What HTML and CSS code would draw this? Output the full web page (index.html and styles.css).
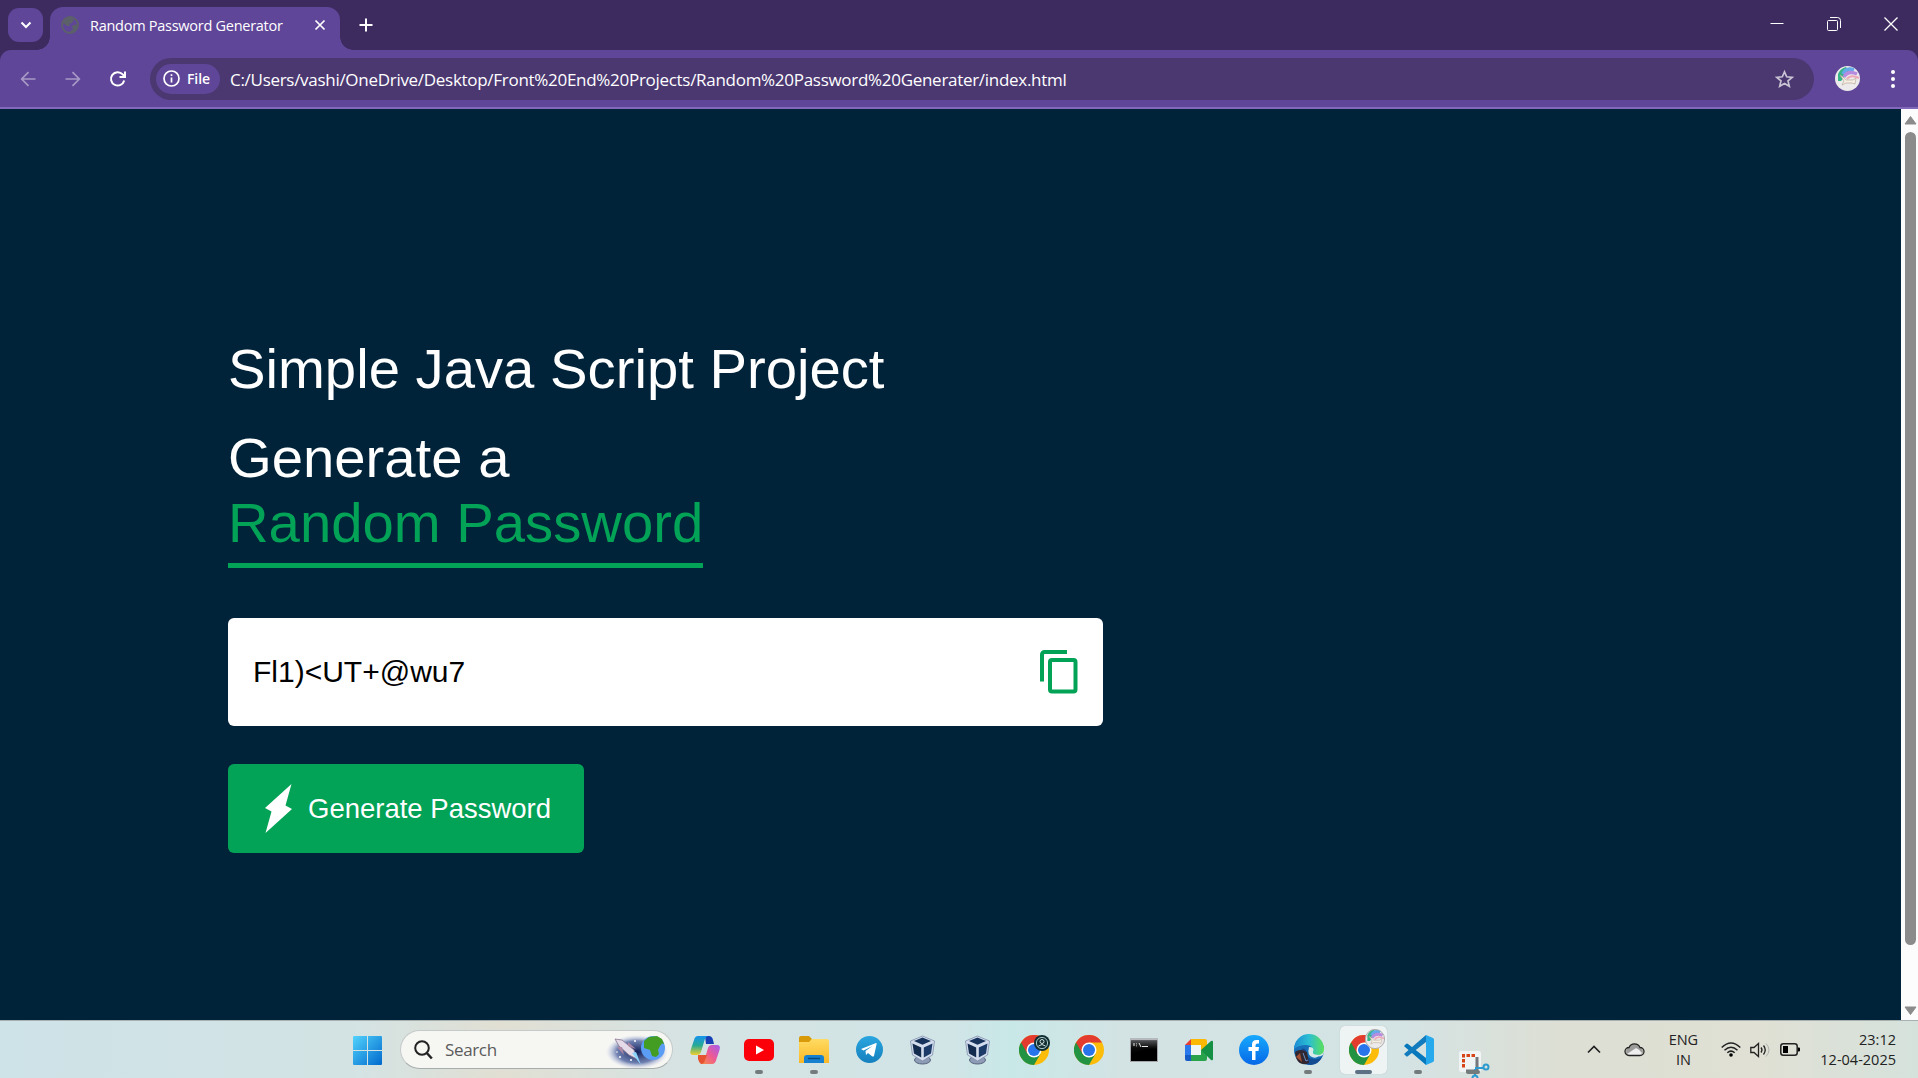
FILE: index.html
```html
<!DOCTYPE html>
<html lang="en">
<head>
<meta charset="utf-8">
<title>Random Password Generator</title>
<link rel="stylesheet" href="styles.css">
</head>
<body>
<svg class="defs" width="0" height="0">
  <defs>
    <linearGradient id="win" x1="0" y1="0" x2="1" y2="1"><stop offset="0" stop-color="#52d3fc"/><stop offset="1" stop-color="#0069cd"/></linearGradient>
    <linearGradient id="cpA" x1="0" y1="0" x2="0" y2="1"><stop offset="0" stop-color="#1593ee"/><stop offset=".5" stop-color="#27aa94"/><stop offset="1" stop-color="#f1cf2b"/></linearGradient>
    <linearGradient id="cpB" x1="1" y1="0" x2="0" y2="1"><stop offset="0" stop-color="#a45cf0"/><stop offset=".5" stop-color="#ee5a93"/><stop offset="1" stop-color="#f7913f"/></linearGradient>
    <linearGradient id="fold" x1="0" y1="0" x2="0" y2="1"><stop offset="0" stop-color="#ffdb63"/><stop offset="1" stop-color="#fbb825"/></linearGradient>
    <linearGradient id="tg" x1="0" y1="0" x2="0" y2="1"><stop offset="0" stop-color="#2aa6e0"/><stop offset="1" stop-color="#1580bd"/></linearGradient>
    <linearGradient id="fb" x1="0" y1="0" x2="0" y2="1"><stop offset="0" stop-color="#17a9fd"/><stop offset="1" stop-color="#0668e7"/></linearGradient>
    <linearGradient id="edgeTop" x1="0" y1="0" x2="1" y2="0"><stop offset="0" stop-color="#1a8bd5"/><stop offset=".5" stop-color="#2cbfd2"/><stop offset="1" stop-color="#5be05a"/></linearGradient>
    <linearGradient id="cmd" x1="0" y1="0" x2="0" y2="1"><stop offset="0" stop-color="#4b4d4e"/><stop offset=".5" stop-color="#090909"/><stop offset="1" stop-color="#000"/></linearGradient>
    <radialGradient id="glow"><stop offset="0" stop-color="#101f58"/><stop offset=".65" stop-color="#566aa4" stop-opacity=".85"/><stop offset="1" stop-color="#b9c3e4" stop-opacity="0"/></radialGradient>
    <symbol id="chrome" viewBox="0 0 48 48">
      <circle cx="24" cy="24" r="24" fill="#fbbc0a"/>
      <path d="M3.200 12A24 24 0 0 0 24 48L34.400 30 24 24z" fill="#229342"/>
      <path d="M3.200 12 13.600 30 24 24 24 12H44.800A24 24 0 0 0 3.200 12z" fill="#e33b2e"/>
      <circle cx="24" cy="24" r="12" fill="#fff"/><circle cx="24" cy="24" r="9.600" fill="#2874ea"/>
    </symbol>
    <symbol id="vbox" viewBox="0 0 26 30">
      <ellipse cx="13" cy="25" rx="8" ry="4" fill="#8e9db5" stroke="#56647d"/>
      <path d="M13 1 25 6 23 20 13 26 3 20 1 6z" fill="#d3dded" stroke="#7484a5" stroke-width=".7"/>
      <path d="M13 2.500 21.500 6 13 9.800 4.500 6z" fill="#17325b"/><path d="M3 8.500 11.700 12.500V22.500L4.500 18.500z" fill="#142b50"/><path d="M23 8.500 14.300 12.500V22.500L21.500 18.500z" fill="#1d3b68"/>
    </symbol>
    <symbol id="unicorn" viewBox="0 0 25 25">
      <circle cx="12.500" cy="12.500" r="12.500" fill="#eceaea"/>
      <path d="M3 15V8a12 12 0 0 1 8-7l3 5-8 9z" fill="#35b487"/>
      <path d="M8 8Q11 1 19 4" fill="none" stroke="#66a9e8" stroke-width="3.500"/>
      <path d="M9 11Q13 4 22 8" fill="none" stroke="#b78be0" stroke-width="3.500"/>
      <path d="M12 13Q16 8 24 12" fill="none" stroke="#efa7b8" stroke-width="2"/>
      <path d="M5 9 8 11 11 14 18 14 21 12 20 18 17 17H11L7 19 9 15z" fill="#f6f0e5" stroke="#b9ab9a" stroke-width=".7"/>
    </symbol>
  </defs>
</svg>
<div class="desktop">
  <header class="browser">
    <div class="tabstrip">
      <button class="tab-search"><svg width="12" height="8" viewBox="0 0 12 8"><path d="M1.500 1.500 6 6l4.500-4.500" class="line w2"/></svg></button>
      <div class="tab">
        <svg class="globe" width="18" height="18" viewBox="0 0 18 18"><circle cx="9" cy="9" r="8" fill="none" stroke="#5c6069" stroke-width="1.800"/><path d="M9 1c3 0 2 2 4 3l-2 3-3 1 1 2H6L2 7Q4 1 9 1zM11 10l5-2q1 5-4 8l-3 .500q0-2 3-3z" fill="#5c6069"/></svg>
        <span class="tab-title">Random Password Generator</span>
        <svg class="tab-close" width="12" height="12" viewBox="0 0 12 12"><path d="m1.500 1.500 9 9m0-9-9 9" class="line w17"/></svg>
      </div>
      <svg class="new-tab" width="14" height="14" viewBox="0 0 14 14"><path d="M7 .5v13M.5 7h13" class="line w2"/></svg>
      <div class="window-controls">
        <svg width="14" height="14" viewBox="0 0 14 14"><path d="M.5 6.500h13" class="line"/></svg>
        <svg width="14" height="14" viewBox="0 0 14 14"><path d="M3 .5h7.500a3 3 0 0 1 3 3V11" class="line"/><rect x=".5" y="3.500" width="10" height="10" rx="1" class="line"/></svg>
        <svg width="14" height="14" viewBox="0 0 14 14"><path d="m.5.5 13 13m0-13-13 13" class="line w1"/></svg>
      </div>
    </div>
    <div class="toolbar">
      <svg class="nav dim" width="16" height="16" viewBox="0 0 16 16"><path d="M15.500 8H2M8.500 1.200 1.700 8l6.800 6.800" class="line w17"/></svg>
      <svg class="nav dim" width="16" height="16" viewBox="0 0 16 16"><path d="M.5 8H14M7.500 1.200 14.300 8l-6.800 6.800" class="line w17"/></svg>
      <svg class="nav" width="16" height="16" viewBox="0 0 16 16"><path d="M14.200 9.500A6.700 6.700 0 1 1 12.700 3.400L14.500 5.500M15 .5V6H9.500" class="line w2"/></svg>
      <div class="address">
        <div class="file-chip"><svg width="17" height="17" viewBox="0 0 17 17"><circle cx="8.500" cy="8.500" r="7.500" class="line w17"/><path d="M8.500 7.500v5M8.500 4.300v1.700" class="line w17"/></svg><span>File</span></div>
        <span class="url">C:/Users/vashi/OneDrive/Desktop/Front%20End%20Projects/Random%20Password%20Generater/index.html</span>
        <svg class="star" width="19" height="18" viewBox="0 0 19 18"><path d="m9.500 1.800 2.200 5 5.500.5-4.200 3.600 1.300 5.400-4.800-2.900-4.800 2.900L6 10.900 1.800 7.300l5.500-.5z" class="line w17"/></svg>
      </div>
      <svg class="avatar" width="25" height="25"><use href="#unicorn"/></svg>
      <svg class="kebab" width="4" height="18" viewBox="0 0 4 18"><circle cx="2" cy="2" r="2"/><circle cx="2" cy="9" r="2"/><circle cx="2" cy="16" r="2"/></svg>
    </div>
  </header>
  <div class="viewport">
    <main class="page">
      <h1 class="intro">Simple Java Script Project</h1>
      <h1 class="title">Generate a<br><span class="accent">Random Password</span></h1>
      <div class="display">
        <span class="password">Fl1)&lt;UT+@wu7</span>
        <svg width="38" height="44" viewBox="0 0 38 44"><path d="M2 31.500V4.500a2.500 2.500 0 0 1 2.500-2.500H27" fill="none" stroke="#02a257" stroke-width="4"/><rect x="10" y="10" width="25.500" height="31.500" rx="2" fill="none" stroke="#02a257" stroke-width="4"/></svg>
      </div>
      <button class="generate"><svg width="27" height="49" viewBox="0 0 27 49"><path d="M26.500 0 0 24 6.500 27.500.5 49 27 25 20.500 21.500z" fill="#fff"/></svg>Generate Password</button>
    </main>
    <div class="scrollbar">
      <svg width="13" height="10" viewBox="0 0 13 10"><path d="M6.500 1.500 12 9H1z" class="tri"/></svg>
      <div class="thumb"></div>
      <svg width="13" height="10" viewBox="0 0 13 10"><path d="M6.500 8.500 12 1H1z" class="tri"/></svg>
    </div>
  </div>
  <footer class="taskbar">
    <svg class="start" width="29" height="29" viewBox="0 0 29 29"><path d="M1 0h13v14H0V1q0-1 1-1zM15 0h13q1 0 1 1v13H15zM0 15h14v14H1q-1 0-1-1zM15 15h14v13q0 1-1 1H15z" fill="url(#win)"/></svg>
    <div class="search">
      <svg width="19" height="20" viewBox="0 0 19 20"><circle cx="8" cy="8" r="6.800" class="ink w2"/><path d="m12.800 13 5 5.500" class="ink w25"/></svg>
      <span>Search</span>
      <svg class="space" width="62" height="34" viewBox="0 0 62 34">
        <ellipse cx="30" cy="19" rx="31" ry="17" fill="url(#glow)"/>
        <circle cx="46" cy="15" r="12" fill="#5b9df5"/><path d="m37 8 5-4 8-1 6 6-3 4-2 4 1 4-3 3-4-1-2-6-6-2zM50 3l5 3 2 5-4-1z" fill="#429d22"/>
        <path d="m8 6 7 1 12 10 3 9-8-4L12 13z" fill="#e5dae8" stroke="#8a7691" stroke-width=".8"/><path d="m10 14 7 8-2-8zM21 9l8 7-8-3z" fill="#ad88a5"/><path d="m25 20 9 12-5-13z" fill="#8dd4fc"/>
        <g fill="#fff"><circle cx="13" cy="24" r="1"/><circle cx="24" cy="27" r="1"/><circle cx="28" cy="8" r="1"/><circle cx="10" cy="19" r=".8"/></g>
      </svg>
    </div>
    <div class="apps">
      <div class="app"><svg width="30" height="28" viewBox="0 0 30 28"><path d="M15 0h4q3 0 4 4l1 4h-8z" fill="#1740b7"/><path d="M8 0h10q-3 1-4 6l-3 10q-1 3-4 3H3q-4 0-2-6L4 4q1-4 4-4z" fill="url(#cpA)"/><path d="M22 28H10q4-1 5-6l3-10q1-3 4-3h5q4 0 2.500 5l-3 9q-1 5-4.500 5z" fill="url(#cpB)"/><path d="M8 19h9l-2 5q-1 4-4 4-2-1-3-5z" fill="#e65330"/></svg></div>
      <div class="app running"><svg width="30" height="22" viewBox="0 0 30 22"><rect width="30" height="22" rx="5" fill="#fb0009"/><path d="m12 6.500 8 4.500-8 4.500z" fill="#fff"/></svg></div>
      <div class="app running"><svg width="30" height="27" viewBox="0 0 30 27"><path d="M0 2q0-2 2-2h8l3 3-3 4H0z" fill="#d99a0a"/><path d="M0 6h10l3-3h15q2 0 2 2v22H0z" fill="url(#fold)"/><path d="M5 27v-5q0-3 3-3h14q3 0 3 3v5z" fill="#1681d0"/><path d="M9 22.500h12" stroke="#094c82" stroke-width="1.500"/></svg></div>
      <div class="app"><svg width="27" height="27" viewBox="0 0 27 27"><circle cx="13.500" cy="13.500" r="13.500" fill="url(#tg)"/><path d="m5 13 15-6q1 0 .6 1L18 20q-1 1-2 .200L12 17l-2 2-.500-4 7-5-9 4.500z" fill="#fff"/></svg></div>
      <div class="app vm"><svg width="27" height="30"><use href="#vbox"/></svg></div>
      <div class="app vm"><svg width="27" height="30"><use href="#vbox"/></svg></div>
      <div class="app"><svg width="30" height="30"><use href="#chrome"/></svg><svg class="badge guest" width="16" height="16" viewBox="0 0 16 16"><circle cx="8" cy="8" r="8" fill="#122f33"/><circle cx="8" cy="8" r="5.600" fill="none" stroke="#a9c7c7" stroke-width="1"/><circle cx="8" cy="6.500" r="2" fill="none" stroke="#d5e3e3"/><path d="M4.500 11q3.500-3 7 0" fill="none" stroke="#d5e3e3"/></svg></div>
      <div class="app"><svg width="30" height="30"><use href="#chrome"/></svg></div>
      <div class="app"><svg width="28" height="24" viewBox="0 0 28 24"><rect x=".5" y=".5" width="27" height="23" fill="#000" stroke="#a4a6aa"/><path d="M1 3h26v8Q15 9 1 17z" fill="url(#cmd)"/><path d="M0 0h28v2.500H0z" fill="#b6b9be"/><path d="M4 5v3M6.500 5.500v.8M6.500 7.500v.8M9 5l2 4M12 8.500h6" stroke="#e8e8e8"/></svg></div>
      <div class="app"><svg width="28" height="22" viewBox="0 0 28 22"><path d="M6 0v6H0z" fill="#e63d32"/><path d="M0 6h6v10H0z" fill="#2979ec"/><path d="M0 16h6v6H2q-2 0-2-2z" fill="#145bc5"/><path d="M6 0h14q2 0 2 2v7l-6 3V6H6z" fill="#fbb905"/><path d="M6 16h10v-5l6 2v7q0 2-2 2H6z" fill="#28a34b"/><path d="m16 11 10-9q2-1 2 1v17q0 2-2 1z" fill="#159044"/><path d="M6 6h10v10H6z" fill="#edf5f5"/></svg></div>
      <div class="app"><svg width="30" height="30" viewBox="0 0 30 30"><circle cx="15" cy="15" r="15" fill="url(#fb)"/><path d="M13 25v-9H9.500v-4H13v-2.500Q13 5 17.500 5H20v3.500h-1.500q-2 0-2 2V12H20l-.500 4h-3v9z" fill="#fff"/></svg></div>
      <div class="app running"><svg width="30" height="30" viewBox="0 0 30 30"><circle cx="15" cy="15" r="15" fill="#176fb9"/><path d="M29 20Q24 23 19 20L18 14 30 13q1 4-1 7z" fill="#d5e4e4"/><path d="M0 14A15 15 0 0 1 30 14q0 6-7 6-6 0-4-4 0-6-7-6T0 14z" fill="url(#edgeTop)"/><path d="M12 15q-1 8 7 9 5 1 9-2-3 7-11 8Q5 29 6 17q2-6 6-2z" fill="#124b91"/><path d="M15 12q6 0 4 5-1 3 6 3-2 4-7 2-5-2-3-10z" fill="#d8e9ea"/><path d="M1 17q5-4 12 0l2 11q-9 4-13-5z" fill="#302630"/><path d="m2 22 4-4 2 9z" fill="#a34f31"/><path d="m9 18 3 8 2-1" stroke="#668dc4" fill="none"/></svg></div>
      <div class="app running active"><svg width="30" height="30"><use href="#chrome"/></svg><svg class="badge profile" width="20" height="20" viewBox="0 0 25 25"><use href="#unicorn" width="25" height="25"/><circle cx="12.500" cy="12.500" r="12" fill="none" stroke="#9d9d9d"/></svg></div>
      <div class="app running"><svg width="30" height="30" viewBox="0 0 30 30"><path d="m0 11 2-2q1-1 2 0l18 14v7L1 12z" fill="#0878bd"/><path d="M0 19 22 0v7L4 21q-1 1-2 0z" fill="#117bbd"/><path d="m22 0 7 3q1 .5 1 2v20q0 1.500-1 2l-7 3z" fill="#27a9ed"/></svg></div>
      <div class="app running snip"><svg width="31" height="28" viewBox="0 0 31 28"><rect x="0" y="0" width="22" height="21" rx="2" fill="#f1f4f5"/><path d="M16 4.500H4.500V17" fill="none" stroke="#d74417" stroke-width="3" stroke-dasharray="3.500 1.500"/><path d="M18 6v13q0 1-1 1H7" fill="none" stroke="#75777a" stroke-width="3"/><path d="m16 17 8 0M16 18v7" stroke="#2d9ad0" stroke-width="2"/><circle cx="27" cy="16" r="2.500" fill="none" stroke="#2d9ad0" stroke-width="2"/><circle cx="16" cy="27" r="2.500" fill="none" stroke="#2d9ad0" stroke-width="2"/></svg></div>
    </div>
    <div class="tray">
      <svg class="chev" width="14" height="9" viewBox="0 0 14 9"><path d="m1 7.500 6-6 6 6" class="ink w17"/></svg>
      <svg class="cloud" width="21" height="15" viewBox="0 0 21 15"><path d="M5 13.500a4.200 4.200 0 0 1 0-8 6 6 0 0 1 11 0 4.200 4.200 0 0 1 0 8z" fill="#9c9d9b"/><path d="m3 12 9-6q3 1 6 5l-2 2.500H5z" fill="#eee"/><path d="M5 13.500a4 4 0 0 1 0-8 6 6 0 0 1 11 0 4 4 0 0 1 0 8z" class="ink"/></svg>
      <div class="lang">ENG<br>IN</div>
      <svg class="wifi" width="20" height="15" viewBox="0 0 20 15"><path d="M.7 5.500q9.300-9 18.600 0M3.500 8.200q6.500-6 13 0M6.300 10.800q3.700-3.300 7.400 0" class="ink w15"/><circle cx="10" cy="13" r="1.800"/></svg>
      <svg class="sound" width="20" height="16" viewBox="0 0 20 16"><path d="M.8 5.500H4L8.500 1.500v13L4 10.500H.8z" class="ink w13"/><path d="M11 5.500q2 2.500 0 5M13.500 3.500q3.500 4.500 0 9" class="ink w13"/><path d="M16 1.500q6 6.500 0 13" fill="none" stroke="#b0b3ae"/></svg>
      <svg class="battery" width="20" height="13" viewBox="0 0 20 13"><rect x=".8" y=".8" width="16.400" height="11.400" rx="2.500" class="ink w15"/><path d="M3 3h5v7H3zM18 4.500h1q1 0 1 1v2q0 1-1 1h-1z"/></svg>
      <div class="clock">23:12<br>12-04-2025</div>
    </div>
  </footer>
</div>
</body>
</html>
```
FILE: styles.css
```css
* { box-sizing: border-box; }
body { margin: 0; overflow: hidden; font-family: "Open Sans", "Noto Sans", sans-serif; }
svg { display: block; flex: none; overflow: visible; }
button { border: 0; padding: 0; font: inherit; }
.defs { position: absolute; }
.desktop { display: flex; flex-direction: column; width: 1918px; height: 1078px; }

.line { fill: none; stroke: #fff; stroke-width: 1; }
.ink { fill: none; stroke: #222; stroke-width: 1.3; }
.w1 { stroke-width: 1.3; }
.w13 { stroke-width: 1.3; }
.w15 { stroke-width: 1.5; }
.w17 { stroke-width: 1.7; }
.w2 { stroke-width: 2; }
.w25 { stroke-width: 2.5; }

.browser { height: 109px; flex: none; background: #3d2b60; color: #fff; }
.tabstrip { display: flex; height: 50px; align-items: flex-start; padding-left: 8px; }
.tab-search { display: flex; align-items: center; justify-content: center; width: 35px; height: 34px; margin-top: 8px; border-radius: 11px; background: #5f4698; }
.tab { display: flex; align-items: center; width: 290px; height: 43px; margin: 7px 0 0 7px; padding: 0 14px 7px 11px; border-radius: 13px 13px 0 0; background: #5f4698; position: relative; }
.tab::before, .tab::after { content: ""; position: absolute; bottom: 0; width: 13px; height: 13px; }
.tab::before { left: -13px; background: radial-gradient(circle at 0 0, transparent 12.5px, #5f4698 13px); }
.tab::after { right: -13px; background: radial-gradient(circle at 100% 0, transparent 12.5px, #5f4698 13px); }
.tab-title { margin-left: 11px; font-size: 14.5px; letter-spacing: -.27px; white-space: nowrap; flex: 1; }
.new-tab { margin: 18px 0 0 19px; }
.window-controls { display: flex; gap: 43px; margin: 17px 20px 0 auto; }
.toolbar { display: flex; align-items: center; height: 59px; padding: 0 23px 0 20px; border-bottom: 2px solid #8268ba; border-radius: 11px 11px 0 0; background: #5f4698; }
.nav { margin-right: 29px; }
.dim { opacity: .45; }
.address { display: flex; align-items: center; width: 1664px; height: 42px; margin-left: -5px; padding: 0 20px 0 6px; border-radius: 21px; background: #4b3871; }
.file-chip { display: flex; align-items: center; gap: 7px; width: 64px; height: 30px; padding-left: 7px; border-radius: 15px; background: #5f4698; font-size: 14px; font-weight: 600; letter-spacing: -.1px; }
.url { margin-left: 10px; font-size: 17px; letter-spacing: -.29px; white-space: nowrap; padding-top: 1px; }
.star { margin-left: auto; opacity: .7; }
.avatar { margin-left: 21px; }
.kebab { margin-left: auto; fill: #fff; }

.viewport { display: flex; height: 911px; flex: none; background: #002339; }
.page { width: 1901px; padding: 223px 0 0 228px; font-family: "Liberation Sans", Arial, sans-serif; }
.intro, .title { margin: 0; color: #fff; font-size: 56.25px; font-weight: 400; line-height: 65px; }
.intro { padding-top: 4px; }
.title { padding-top: 24px; }
.accent { display: inline-block; height: 78px; border-bottom: 5px solid #02a257; color: #02a257; }
.display { display: flex; align-items: center; justify-content: space-between; width: 875px; height: 108px; margin-top: 50px; padding: 0 25px 0 25px; border-radius: 6px; background: #fff; }
.password { color: #000; font-size: 30px; }
.generate { display: flex; align-items: center; gap: 16px; width: 356px; height: 89px; margin-top: 38px; padding-left: 37px; border-radius: 6px; background: #02a257; color: #fff; font-size: 27.5px; white-space: nowrap; }
.scrollbar { display: flex; flex-direction: column; align-items: center; width: 17px; padding: 6px 0 4px; background: #fcfcfc; }
.thumb { width: 11px; height: 813px; margin: 7px 0 auto 2px; border-radius: 6px; background: #8b8b8b; }
.scrollbar svg { margin-left: 2px; }
.tri { fill: #8b8b8b; stroke: #8b8b8b; stroke-linejoin: round; }

.taskbar { display: flex; align-items: center; height: 58px; flex: none; padding: 2px 22px 2px 353px; border-top: 1px solid #a7b1b2; background: linear-gradient(90deg, #cee3e8 0, #d3e3e4 350px, #e1dfd3 500px, #d5e3e3 690px, #d1e4e6 950px, #c8e8e7 1010px, #d3e3e4 1120px, #d4e3e4 1400px, #dddfd4 1560px, #e0e0d4 1760px, #d5e2dc 1918px); color: #222; }
.start { margin-top: 1px; }
.search { display: flex; align-items: center; width: 273px; height: 39px; margin-left: 18px; padding: 0 6px 0 13px; border: 1px solid #c4caca; border-bottom-color: #a6adad; border-radius: 20px; background: #f6f6f3; color: #5b5b5b; font-size: 17px; }
.search span { margin-left: 12px; letter-spacing: -.35px; }
.space { margin-left: auto; margin-right: -3px; }
.apps { display: flex; gap: 7.95px; margin-left: 8px; }
.app { display: flex; align-items: center; justify-content: center; width: 47px; height: 48px; position: relative; border-radius: 5px; }
.vm { padding-right: 3px; }
.running::after { content: ""; position: absolute; bottom: 0; left: 19px; width: 8px; height: 4px; border-radius: 2px; background: #747b7c; }
.active { background: #eef3f3; box-shadow: 0 0 1px #a7b2b2; }
.active::after { left: 15px; width: 17px; background: #5d7184; }
.badge { position: absolute; }
.guest { top: 9px; right: 8px; }
.profile { top: 3px; right: 2px; }
.snip svg { position: relative; left: 1px; top: 15px; }
.snip::after { z-index: 1; left: 16px; width: 14px; }
.tray { display: flex; align-items: center; margin-left: auto; font-size: 14.5px; line-height: 20px; }
.tray > * { flex: none; }
.cloud { margin-left: 23px; }
.lang { width: 32px; margin-left: 22px; text-align: center; letter-spacing: -.2px; }
.wifi { margin-left: 22px; }
.sound { margin-left: 9px; }
.battery { margin-left: 10px; }
.clock { margin-left: 20px; text-align: right; white-space: nowrap; }
```
